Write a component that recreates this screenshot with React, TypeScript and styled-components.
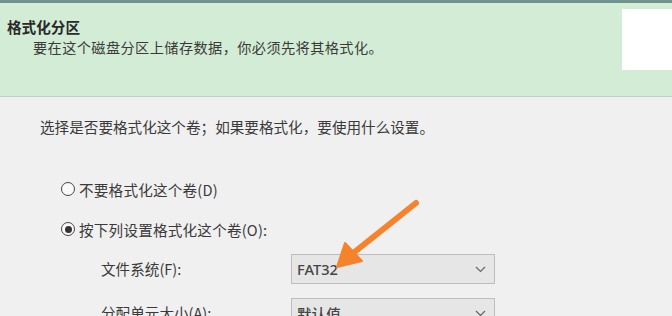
import React from "react";
import styled, { createGlobalStyle } from "styled-components";

const GlobalStyle = createGlobalStyle`
  html, body {
    margin: 0;
    padding: 0;
    background: #f0f0f0;
  }
  body {
    font-family: "Noto Sans CJK SC", "Noto Sans", sans-serif;
    color: #333;
  }
`;

const Frame = styled.div`
  position: relative;
  width: 672px;
  height: 316px;
  overflow: hidden;
  background: #f0f0f0;
`;

const TopBar = styled.div`
  height: 3px;
  background: #6f948f;
`;

const Header = styled.header`
  height: 94px;
  box-sizing: border-box;
  background: #d3ecd5;
  border-bottom: 1px solid #c4cdc6;
  display: flex;
  justify-content: space-between;
  align-items: flex-start;
`;

const HeaderText = styled.div`
  padding: 14px 0 0 7px;
  display: flex;
  flex-direction: column;
`;

const Title = styled.div`
  font-size: 14.6px;
  line-height: 20px;
  font-weight: 700;
  color: #2a2a2a;
`;

const Subtitle = styled.div`
  font-size: 14.2px;
  line-height: 20px;
  letter-spacing: 0.4px;
  padding-left: 26px;
  color: #3a3a3a;
`;

const IconBox = styled.div`
  width: 50px;
  height: 61px;
  margin-top: 6px;
  background: #ffffff;
`;

const Body = styled.main`
  padding: 20px 0 0 40px;
  display: flex;
  flex-direction: column;
`;

const Paragraph = styled.div`
  font-size: 14.6px;
  line-height: 20px;
  color: #3a3a3a;
`;

const RadioRow = styled.label<{ $first?: boolean }>`
  display: flex;
  align-items: center;
  gap: 4px;
  margin-top: ${(p) => (p.$first ? "42px" : "20px")};
  padding-left: 21px;
  height: 20px;
  font-size: 14.6px;
  letter-spacing: 0.2px;
  color: #3a3a3a;
`;

const RadioCircle = styled.span<{ $checked?: boolean }>`
  width: 14px;
  height: 14px;
  box-sizing: border-box;
  border: 1px solid #444;
  border-radius: 50%;
  background: #fafafa;
  display: flex;
  align-items: center;
  justify-content: center;
  &::after {
    content: "";
    width: 7px;
    height: 7px;
    border-radius: 50%;
    background: ${(p) => (p.$checked ? "#333" : "transparent")};
  }
`;

const FieldRow = styled.div<{ $first?: boolean }>`
  display: flex;
  align-items: center;
  margin-top: ${(p) => (p.$first ? "15px" : "14px")};
  padding-left: 61px;
`;

const FieldLabel = styled.span`
  width: 190px;
  font-size: 14.6px;
  line-height: 20px;
  color: #3a3a3a;
`;

const Select = styled.div`
  width: 204px;
  height: 30px;
  box-sizing: border-box;
  border: 1px solid #bdbdbd;
  background: #e6e6e6;
  display: flex;
  align-items: center;
  justify-content: space-between;
  padding: 0 8px 0 5px;
  font-size: 14.6px;
  color: #444;
`;

const SelectValue = styled.span`
  font-family: "Noto Sans", "Noto Sans CJK SC", sans-serif;
  font-weight: 500;
`;

const Chevron = () => (
  <svg width="11" height="7" viewBox="0 0 11 7">
    <path d="M1 1 L5.5 5.5 L10 1" fill="none" stroke="#666" strokeWidth="1.2" />
  </svg>
);

const ArrowOverlay = styled.svg`
  position: absolute;
  left: 0;
  top: 0;
  pointer-events: none;
`;

export default function App() {
  return (
    <Frame>
      <GlobalStyle />
      <TopBar />
      <Header>
        <HeaderText>
          <Title>格式化分区</Title>
          <Subtitle>要在这个磁盘分区上储存数据，你必须先将其格式化。</Subtitle>
        </HeaderText>
        <IconBox />
      </Header>
      <Body>
        <Paragraph>选择是否要格式化这个卷；如果要格式化，要使用什么设置。</Paragraph>
        <RadioRow $first>
          <RadioCircle />
          不要格式化这个卷(D)
        </RadioRow>
        <RadioRow>
          <RadioCircle $checked />
          按下列设置格式化这个卷(O):
        </RadioRow>
        <FieldRow $first>
          <FieldLabel>文件系统(F):</FieldLabel>
          <Select>
            <SelectValue>FAT32</SelectValue>
            <Chevron />
          </Select>
        </FieldRow>
        <FieldRow>
          <FieldLabel>分配单元大小(A):</FieldLabel>
          <Select>
            <SelectValue>默认值</SelectValue>
            <Chevron />
          </Select>
        </FieldRow>
      </Body>
      <ArrowOverlay width="672" height="316" viewBox="0 0 672 316">
        <line x1="416" y1="203" x2="352" y2="254" stroke="#f5832b" strokeWidth="6" strokeLinecap="round" />
        <polygon points="337,267 345,243 362,261" fill="#f5832b" stroke="#f5832b" strokeWidth="2" strokeLinejoin="round" />
      </ArrowOverlay>
    </Frame>
  );
}
